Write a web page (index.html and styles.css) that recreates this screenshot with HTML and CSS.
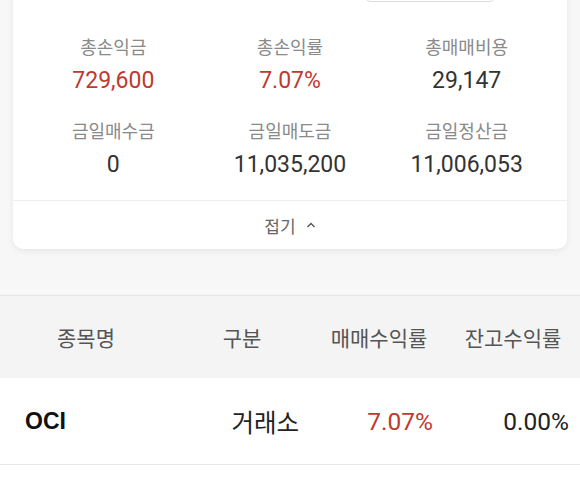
FILE: index.html
```html
<!DOCTYPE html>
<html lang="ko">
<head>
<meta charset="utf-8">
<link rel="stylesheet" href="styles.css">
</head>
<body>
<section class="summary">
  <div class="card">
    <div class="card-top"><span class="top-btn"></span></div>
    <div class="stats">
      <div class="stat"><div class="label">총손익금</div><div class="value up">729,600</div></div>
      <div class="stat"><div class="label">총손익률</div><div class="value up">7.07%</div></div>
      <div class="stat"><div class="label">총매매비용</div><div class="value">29,147</div></div>
      <div class="stat"><div class="label">금일매수금</div><div class="value">0</div></div>
      <div class="stat"><div class="label">금일매도금</div><div class="value">11,035,200</div></div>
      <div class="stat"><div class="label">금일정산금</div><div class="value">11,006,053</div></div>
    </div>
    <div class="fold">접기
      <svg class="chev" width="10" height="6" viewBox="0 0 10 6"><polyline points="1.5,5 5,1.5 8.5,5" fill="none" stroke="#555" stroke-width="1.4"/></svg>
    </div>
  </div>
</section>
<section class="table">
  <div class="thead">
    <div class="th">종목명</div>
    <div class="th">구분</div>
    <div class="th">매매수익률</div>
    <div class="th">잔고수익률</div>
  </div>
  <div class="trow">
    <div class="td name">OCI</div>
    <div class="td">거래소</div>
    <div class="td up">7.07%</div>
    <div class="td last">0.00%</div>
  </div>
</section>
</body>
</html>
```
FILE: styles.css
```css
* { box-sizing: border-box; }
html, body { margin: 0; padding: 0; }
body {
  width: 580px;
  height: 482px;
  overflow: hidden;
  background: #ffffff;
  font-family: Roboto, "Noto Sans CJK KR", sans-serif;
  color: #333;
}
.summary {
  background: #f7f7f7;
  padding: 0 13px 46px;
  overflow: hidden;
}
.card {
  margin-top: -40px;
  background: #fff;
  border-radius: 10px;
  box-shadow: 0 2px 6px rgba(0,0,0,0.07);
}
.card-top {
  height: 41px;
  display: flex;
  justify-content: flex-end;
  align-items: flex-end;
  padding-right: 73px;
}
.top-btn {
  width: 128px;
  height: 36px;
  border: 1px solid #dcdcdc;
  border-radius: 4px;
  margin-bottom: -1px;
}
.stats {
  display: grid;
  grid-template-columns: repeat(3, 1fr);
  row-gap: 25px;
  padding: 36px 12px 20px;
}
.stat { text-align: center; }
.label {
  font-size: 18px;
  line-height: 22px;
  color: #8a8a8a;
}
.value {
  margin-top: 7px;
  font-size: 23px;
  line-height: 30px;
  color: #333;
}
.up { color: #c0392f; }
.fold {
  border-top: 1px solid #eeeeee;
  height: 49px;
  display: flex;
  align-items: center;
  justify-content: center;
  gap: 10px;
  font-size: 17px;
  color: #666;
}
.chev { display: block; }
.table {
  border-top: 1px solid #e6e6e6;
}
.thead, .trow {
  display: grid;
  grid-template-columns: 172px 140px 134px 134px;
  align-items: center;
}
.thead {
  height: 82px;
  background: #f4f4f4;
}
.th {
  text-align: center;
  font-size: 21px;
  color: #555;
}
.trow {
  height: 87px;
  background: #fff;
  border-bottom: 1px solid #e6e6e6;
}
.td {
  text-align: right;
  padding-right: 13px;
  font-size: 24.5px;
  color: #222;
}
.td.last { padding-right: 11px; }
.td.up { color: #c0392f; }
.td.name {
  text-align: left;
  padding-left: 25px;
  font-size: 23px;
  font-weight: 700;
  font-family: "Liberation Sans", Roboto, sans-serif;
  color: #111;
}
```
